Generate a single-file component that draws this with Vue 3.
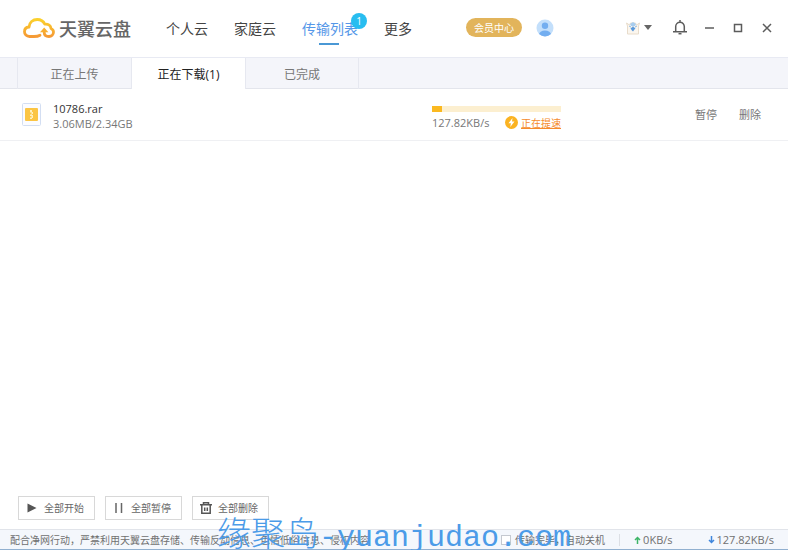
<script setup>
import { ref } from 'vue'

const navItems = [
  { label: '个人云' },
  { label: '家庭云' },
  { label: '传输列表', active: true, badge: 1 },
  { label: '更多' },
]
const tabs = ['正在上传', '正在下载(1)', '已完成']
const activeTab = ref(1)
const shutdown = ref(false)
const progress = 8
</script>

<template>
  <div class="app">
    <header class="header">
      <a class="logo" href="#">
        <svg class="cloud" viewBox="0 0 32 20" fill="none">
          <defs>
            <linearGradient id="cloudFill" x1="0" y1="0" x2="0" y2="1">
              <stop offset="0" stop-color="#fbd02c" />
              <stop offset="1" stop-color="#f59a35" />
            </linearGradient>
          </defs>
          <path
            d="M17 17.2c-2 1.2-4 1.3-6 1.3H6.500C3.500 18.500 1.500 16.400 1.500 13.700c0-2.700 2-4.500 4.500-4.700C6.400 4.600 9.800 1.500 14.200 1.500c3.500 0 6.300 1.800 7.600 4.700 3.600-.4 5.900 1.600 6.200 4.200 1.500.7 2.500 2.000 2.500 3.700 0 2.500-2 4.400-4.500 4.400-2.800 0-4.800-1.600-4.800-4.300v-2"
            stroke="url(#cloudFill)" stroke-width="2.800" stroke-linecap="round" stroke-linejoin="round"
          />
          <path d="M17 14.200l4.200-4.700 4.200 4.700z" fill="#f8ae31" />
        </svg>
        <span>天翼云盘</span>
      </a>
      <nav class="nav">
        <a v-for="item in navItems" :key="item.label" href="#" class="nav-item" :class="{ active: item.active }">
          {{ item.label }}<span v-if="item.badge" class="badge">{{ item.badge }}</span>
        </a>
      </nav>
      <button class="vip">会员中心</button>
      <button class="icon-btn" aria-label="账户">
        <svg width="18" height="18" viewBox="0 0 18 18">
          <defs><clipPath id="face"><circle cx="9" cy="9" r="8.500" /></clipPath></defs>
          <circle cx="9" cy="9" r="8.500" fill="#c3dffb" />
          <g clip-path="url(#face)" fill="#73aef0">
            <circle cx="9" cy="6.800" r="3.200" />
            <ellipse cx="9" cy="15.500" rx="6" ry="4" />
          </g>
        </svg>
      </button>
      <div class="tools">
        <button class="icon-btn skin" aria-label="皮肤">
          <svg width="16" height="14" viewBox="0 0 16 14">
            <path d="M1.500 2l3 2 1-2h5l1 2 3-2-1 3v8h-11V5z" fill="#fbf6ee" stroke="#e8dccb" />
            <path d="M5 3l3-2 3 2-1 2H6z" fill="#a9cdee" />
            <path d="M4 5l2 1M12 5l-2 1" stroke="#8db8e4" />
            <path d="M8 5l1 1.500 1.500.5-1 1.500L8 10.500 6.500 9l-1-2 1.500-.5z" fill="#5a99dc" />
          </svg>
          <svg width="8" height="5" viewBox="0 0 8 5"><path d="M0 0h8L4 5z" fill="#666" /></svg>
        </button>
        <button class="icon-btn" aria-label="通知">
          <svg width="14" height="15" viewBox="0 0 14 15" fill="none" stroke="#5c5c5c" stroke-width="1.500">
            <path d="M7 0v2M2.700 11.500V6.500a4.300 4.300 0 0 1 8.600 0v5M0 11.700h14" />
            <path d="M5.500 13.700h3" />
          </svg>
        </button>
        <div class="window-controls">
          <button class="icon-btn" aria-label="最小化">
            <svg width="10" height="10" viewBox="0 0 10 10"><path d="M1 5h9" stroke="#5c5c5c" stroke-width="1.500" /></svg>
          </button>
          <button class="icon-btn" aria-label="最大化">
            <svg width="10" height="10" viewBox="0 0 10 10"><path d="M1.500 1.500h7v7h-7z" fill="none" stroke="#5c5c5c" stroke-width="1.500" /></svg>
          </button>
          <button class="icon-btn" aria-label="关闭">
            <svg width="10" height="10" viewBox="0 0 10 10"><path d="M1 1l8 8M9 1L1 9" stroke="#5c5c5c" stroke-width="1.500" /></svg>
          </button>
        </div>
      </div>
    </header>

    <div class="tabs">
      <button
        v-for="(tab, i) in tabs" :key="tab" class="tab" :class="{ active: i === activeTab }"
        @click="activeTab = i"
      >{{ tab }}</button>
    </div>

    <main class="list">
      <div class="row">
        <div class="file">
          <svg width="19" height="23" viewBox="0 0 19 23">
            <rect x=".5" y=".5" width="18" height="22" rx="1" fill="#fbfcff" stroke="#d3def2" />
            <rect x="3" y="5" width="13" height="13" rx="1" fill="#fbc544" />
            <path d="M8 7h2v2h1v2h-1v1h1v3h-1v1H8v-1.500h1.500V13H8v-1.500h1.500V9.500H8z" fill="#fff0bd" />
          </svg>
          <div class="file-text">
            <div class="name">10786.rar</div>
            <div>3.06MB/2.34GB</div>
          </div>
        </div>
        <div class="transfer">
          <div class="bar"><div class="fill" :style="{ width: progress + '%' }"></div></div>
          <div class="speed">
            <span>127.82KB/s</span>
            <a class="boost" href="#">
              <svg width="13" height="13" viewBox="0 0 13 13">
                <circle cx="6.500" cy="6.500" r="6.500" fill="#fbb321" />
                <path d="M7.500 2L3.500 7.200h2.400L5.300 11l4.200-5.400H7z" fill="#fff" />
              </svg>
              <span>正在提速</span>
            </a>
          </div>
        </div>
        <div class="actions">
          <button>暂停</button>
          <button>删除</button>
        </div>
      </div>
    </main>

    <div class="bulk">
      <button>
        <svg width="12" height="12" viewBox="0 0 12 12"><path d="M1.500 1.500l9 4.500-9 4.500z" fill="#555" /></svg>
        全部开始
      </button>
      <button>
        <svg width="12" height="12" viewBox="0 0 12 12"><path d="M3 1v10M8.500 1v10" stroke="#666" stroke-width="1.500" /></svg>
        全部暂停
      </button>
      <button>
        <svg width="12" height="12" viewBox="0 0 12 12" fill="none" stroke="#555" stroke-width="1.500">
          <path d="M0 2.700h12M3.500 2.500V.8h5v1.700M1.800 3v8.200h8.400V3M4.700 5.500v3.500M7.300 5.500v3.500" />
        </svg>
        全部删除
      </button>
    </div>

    <footer class="status">
      <span>配合净网行动，严禁利用天翼云盘存储、传输反动信息、色情低俗信息、侵权内容</span>
      <label class="shutdown"><input v-model="shutdown" type="checkbox" />传输完毕，自动关机</label>
      <span class="rate up">
        <svg width="7" height="8" viewBox="0 0 7 8"><path d="M3.500 8V1.500M1 4l2.500-2.500L6 4" fill="none" stroke="#3db567" stroke-width="1.500" /></svg>
        0KB/s
      </span>
      <span class="rate">
        <svg width="7" height="8" viewBox="0 0 7 8"><path d="M3.500 0v6.500M1 4l2.500 2.500L6 4" fill="none" stroke="#3f86dc" stroke-width="1.500" /></svg>
        127.82KB/s
      </span>
    </footer>

    <div class="watermark"><span class="mark-name">缘聚岛</span><span>-yuanjudao.com</span></div>
  </div>
</template>

<style>
body {
  margin: 0;
}
</style>

<style scoped>
.app {
  position: relative;
  display: flex;
  flex-direction: column;
  min-height: 100vh;
  background: #fff;
  color: #777;
  font: 11px/16px 'Open Sans', 'Noto Sans CJK SC', sans-serif;
}
.app * {
  box-sizing: border-box;
}
button {
  padding: 0;
  border: 0;
  background: none;
  color: inherit;
  font: inherit;
  white-space: nowrap;
}
a {
  color: inherit;
  text-decoration: none;
}
svg {
  display: block;
  flex: none;
}
.header {
  display: flex;
  align-items: center;
  height: 58px;
  padding: 0 16px 2px 23px;
  border-bottom: 1px solid #e8eaf3;
}
.logo {
  display: flex;
  align-items: center;
  gap: 4px;
  color: #666;
  font-size: 18px;
  font-weight: 500;
  line-height: 24px;
  white-space: nowrap;
}
.logo span {
  padding-top: 2px;
}
.cloud {
  width: 32px;
  height: 20px;
}
.nav {
  display: flex;
  gap: 26px;
  margin-left: 35px;
  padding-top: 2px;
}
.nav-item {
  position: relative;
  color: #444;
  font-size: 14px;
  line-height: 32px;
  white-space: nowrap;
}
.nav-item.active {
  color: #5597e8;
}
.nav-item.active::after {
  content: '';
  position: absolute;
  bottom: 0;
  left: 50%;
  width: 20px;
  height: 2px;
  margin-left: -11px;
  background: #4a98d5;
}
.badge {
  position: absolute;
  top: 0;
  right: -9px;
  width: 16px;
  height: 16px;
  border-radius: 50%;
  background: #28bdf0;
  color: #fff;
  font-size: 10px;
  line-height: 16px;
  text-align: center;
}
.vip {
  height: 19px;
  margin: 0 14px 0 54px;
  padding: 0 8px;
  border-radius: 10px;
  background: #e2b45b;
  color: #fff;
  font-size: 10px;
  line-height: 18px;
}
.icon-btn {
  display: flex;
  align-items: center;
}
.tools,
.window-controls {
  display: flex;
  align-items: center;
}
.tools {
  gap: 17px;
  margin-left: auto;
}
.window-controls {
  gap: 19px;
}
.skin {
  gap: 3px;
  margin-right: 4px;
}
.tabs {
  display: flex;
  height: 31px;
  padding-left: 17px;
  background: #f4f5fa;
  box-shadow: inset 0 -1px #e3e5ec;
}
.tab {
  width: 114px;
  padding-top: 2px;
  border-left: 1px solid #e6e8f0;
  color: #777;
  font-size: 12px;
}
.tab:last-child {
  border-right: 1px solid #e6e8f0;
}
.tab.active {
  background: #fff;
  color: #222;
}
.list {
  flex: 1;
}
.row {
  display: grid;
  grid-template-columns: 410fr 129px 200fr;
  align-items: center;
  height: 52px;
  padding: 0 27px 0 22px;
  border-bottom: 1px solid #eff0f3;
}
.file {
  display: flex;
  align-items: center;
  gap: 12px;
}
.file-text {
  padding-top: 3px;
  line-height: 15px;
}
.name {
  color: #333;
}
.transfer {
  padding-top: 7px;
}
.bar {
  height: 6px;
  margin-bottom: 3px;
  background: #fcefd0;
}
.fill {
  height: 100%;
  background: #fbb920;
}
.speed {
  display: flex;
  justify-content: space-between;
}
.boost {
  display: flex;
  align-items: center;
  gap: 3px;
  color: #f58b2c;
  font-size: 10px;
}
.boost span {
  text-decoration: underline;
}
.actions {
  display: flex;
  justify-content: flex-end;
  gap: 22px;
}
.bulk {
  display: flex;
  gap: 10px;
  padding: 0 18px 9px;
}
.bulk button {
  display: flex;
  align-items: center;
  gap: 6px;
  height: 24px;
  padding: 0 10px 0 7px;
  border: 1px solid #d8d8d8;
  color: #666;
  font-size: 10px;
}
.status {
  display: flex;
  align-items: center;
  height: 21px;
  padding: 0 14px 0 10px;
  border-top: 1px solid #e1e4ea;
  border-bottom: 1px solid #91b0d0;
  background: #f4f7fc;
  color: #707070;
  font-size: 10px;
  white-space: nowrap;
}
.shutdown {
  display: flex;
  align-items: center;
  gap: 4px;
  margin-left: auto;
}
.shutdown input {
  appearance: none;
  width: 10px;
  height: 10px;
  margin: 0;
  border: 1px solid #c5c9d0;
  background: #fff;
}
.rate {
  display: flex;
  align-items: center;
  gap: 2px;
  font-size: 11px;
}
.up {
  margin: 0 35px 0 14px;
  padding-left: 14px;
  border-left: 1px solid #dcdfe5;
  line-height: 12px;
}
.watermark {
  position: absolute;
  right: 0;
  bottom: 0;
  left: 0;
  display: flex;
  justify-content: center;
  align-items: baseline;
  color: #4b9be8;
  font: 30px/24px 'Liberation Mono', 'Noto Sans CJK SC', monospace;
  pointer-events: none;
}
.mark-name {
  font-family: 'Noto Sans CJK SC', sans-serif;
  font-size: 34px;
  font-weight: 300;
}
</style>
